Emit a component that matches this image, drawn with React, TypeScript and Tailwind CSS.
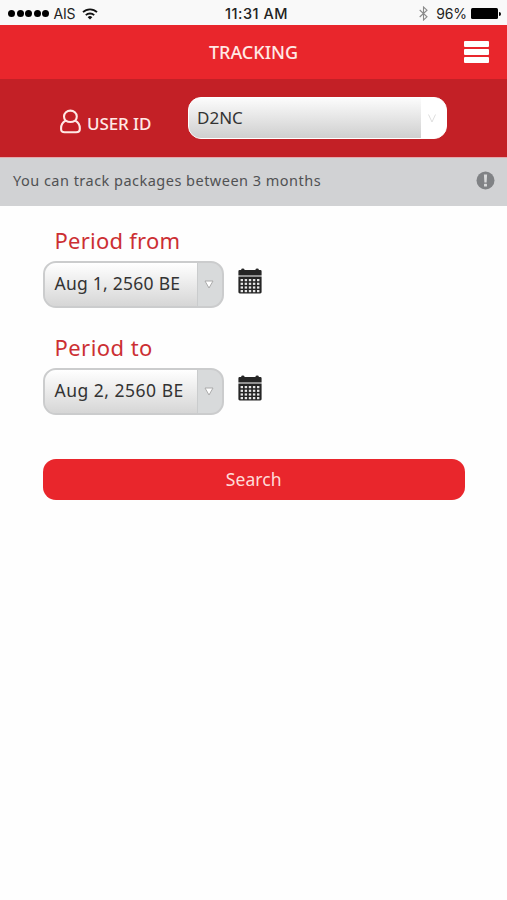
import { useState } from 'react';

interface DateFieldProps {
  label: string;
  value: string;
  labelClass: string;
  valueClass: string;
}

/**
 * Signal dots, carrier, clock and battery
 */
function StatusBar() {
  return (
    <div className="grid h-[25px] grid-cols-3 items-center bg-[#f9f9f9] pt-0.5 font-['Inter',sans-serif] text-[14px] text-[#222]">
      <div className="flex items-center pl-2">
        <div className="flex gap-[1.6px]">
          {[0, 1, 2, 3, 4].map((dot) => (
            <span key={dot} className="h-[7px] w-[7px] rounded-full bg-black" />
          ))}
        </div>
        <span className="ml-1 text-[14px] tracking-[-0.1px]">AIS</span>
        <svg className="ml-[7px] h-[12px] w-[16px]" viewBox="0 0 16 12" fill="none" stroke="#111" strokeWidth="1.8">
          <path d="M1 4.2a10 10 0 0 1 14 0" />
          <path d="M3.8 7.2a6 6 0 0 1 8.4 0" />
          <path d="M8 11.6 5.7 9.2a3.3 3.3 0 0 1 4.6 0z" fill="#111" stroke="none" />
        </svg>
      </div>
      <span className="pl-1.5 text-center text-[14.5px] font-medium tracking-[0.5px]">11:31 AM</span>
      <div className="flex items-center justify-end pr-[6px]">
        <svg className="mr-[8px] h-[15px] w-[9px]" viewBox="0 0 9 15" fill="none" stroke="#8a8a8a" strokeWidth="1.1">
          <path d="M.7 4 8 10.8 4.5 14V1L8 4.2.7 11" />
        </svg>
        <span className="tracking-[-0.1px]">96%</span>
        <span className="ml-[4px] h-[11px] w-[27px] rounded-[1.5px] bg-black" />
        <span className="ml-px h-[4px] w-[2px] rounded-r-full bg-black" />
      </div>
    </div>
  );
}

function CalendarIcon() {
  return (
    <svg className="h-[26px] w-[24px]" viewBox="0 0 24 26">
      <path
        d="M1.6 2H3.2V1.6Q3.2 .4 4.8 .4T6.5 1.6V2H17.5V1.6Q17.5 .4 19.2 .4T20.8 1.6V2H22.4Q23.6 2 23.6 3.2V7.4H.4V3.2Q.4 2 1.6 2Z"
        fill="#262626"
      />
      <path d="M.4 8.6H23.6V24Q23.6 25.4 22.2 25.4H1.8Q.4 25.4 .4 24Z" fill="#262626" />
      {[11, 14.7, 18.4, 22].map((y) =>
        [2.6, 6.7, 10.8, 14.9, 19].map((x) => (
          <rect key={`${x}-${y}`} x={x} y={y} width="2.4" height="2.2" fill="#e8e8e8" />
        )),
      )}
    </svg>
  );
}

/**
 * Labelled date picker with a calendar button
 */
function DateField({ label, value, labelClass, valueClass }: DateFieldProps) {
  return (
    <div className="h-[107px]">
      <div className={`h-[36px] pl-3 text-[22px] leading-[30px] text-[#cc2f33] ${labelClass}`}>{label}</div>
      <div className="flex items-start">
        <button
          type="button"
          className="flex h-[47px] w-[181px] overflow-hidden rounded-[13px] border-2 border-[#cbcccd] bg-[#d8dadb] text-left"
        >
          <span
            className={`h-full w-[152px] whitespace-nowrap bg-linear-to-b from-white to-[#d6d6d6] pl-[10px] text-[17.5px] leading-[41px] text-[#333] ${valueClass}`}
          >
            {value}
          </span>
          <span className="flex h-full flex-1 items-center justify-center border-l border-[#cacccd] pr-0.5">
            <svg className="h-[9px] w-[10px]" viewBox="0 0 10 9" fill="#fff" stroke="#aaa" strokeWidth="1">
              <path d="M1 1H9L5 8Z" />
            </svg>
          </span>
        </button>
        <button type="button" className="ml-[14px] mt-[7px]" aria-label={label}>
          <CalendarIcon />
        </button>
      </div>
    </div>
  );
}

export default function App() {
  const [userId] = useState('D2NC');

  return (
    <div className="flex h-[900px] w-[507px] flex-col bg-[#fefefe] font-['Noto_Sans',sans-serif]">
      <StatusBar />

      {/* Title bar */}
      <header className="grid h-[54px] grid-cols-[1fr_auto_1fr] items-center bg-[#e9262c]">
        <span />
        <h1 className="text-[18px] font-medium text-[#ffe9e5]">TRACKING</h1>
        <button type="button" className="mr-[18px] flex flex-col gap-[2px] justify-self-end" aria-label="Menu">
          <span className="h-[6px] w-[25px] rounded-[1px] bg-white" />
          <span className="h-[6px] w-[25px] rounded-[1px] bg-white" />
          <span className="h-[6px] w-[25px] rounded-[1px] bg-white" />
        </button>
      </header>

      {/* User picker */}
      <section className="flex h-[78px] items-start bg-[#c32026] pl-[60px]">
        <svg className="mt-[29px] h-[26px] w-[21px]" viewBox="0 0 21 26" fill="none" stroke="#ffe9e5" strokeWidth="2.1">
          <path d="M5.6 12.6A6.4 6 0 1 1 15.2 12.6Q19.8 15.2 19.8 20V21.2Q19.8 24.2 16.2 24.2H4.6Q1.1 24.2 1.1 21.2V20Q1.1 15.2 5.6 12.6Z" />
          <path d="M5.6 12.6Q10.4 15.4 15.2 12.6" />
        </svg>
        <span className="ml-[6px] mt-[32px] w-[101px] text-[17px] font-medium leading-[26px] tracking-[-0.1px] text-[#ffe9e5]">
          USER ID
        </span>
        <button
          type="button"
          className="mt-[18px] flex h-[42px] w-[259px] overflow-hidden rounded-[13px] border border-white bg-white text-left"
        >
          <span className="h-full w-[232px] bg-linear-to-b from-[#fcfcfc] to-[#cfcfcf] pl-[8px] text-[17px] leading-[40px] text-[#333]">
            {userId}
          </span>
          <span className="flex h-full flex-1 items-center justify-center pr-1">
            <svg className="h-[9px] w-[8px]" viewBox="0 0 8 9" fill="none" stroke="#dedede" strokeWidth="1">
              <path d="M.5 .5 4 8 7.5 .5" />
            </svg>
          </span>
        </button>
      </section>

      {/* Notice */}
      <section className="flex h-[49px] items-center justify-between border-t border-[#e2aaad] bg-[#d1d2d4] pb-[4px] pl-[13px] pr-[12px]">
        <p className="whitespace-nowrap pt-px text-[14.5px] tracking-[0.48px] text-[#505153]">
          You can track packages between 3 months
        </p>
        <svg className="h-[19px] w-[19px]" viewBox="0 0 19 19">
          <circle cx="9.5" cy="9.5" r="9" fill="#808285" />
          <path d="M7.9 3.4h3.2l-.5 8.2H8.4z" fill="#d9dadb" />
          <rect x="8" y="12.8" width="3" height="2.8" rx=".6" fill="#d9dadb" />
        </svg>
      </section>

      <main className="flex flex-col pl-[42.5px] pr-[42px] pt-[19px]">
        <DateField label="Period from" value="Aug 1, 2560 BE" labelClass="tracking-[0.25px]" valueClass="tracking-[0.25px]" />
        <DateField label="Period to" value="Aug 2, 2560 BE" labelClass="tracking-[0.45px]" valueClass="tracking-[0.5px]" />
        <button
          type="button"
          className="mt-[20px] h-[41px] rounded-[13px] bg-[#e9262c] pb-px text-[17.5px] tracking-[0.1px] text-[#ffdcd8]"
        >
          Search
        </button>
      </main>
    </div>
  );
}
